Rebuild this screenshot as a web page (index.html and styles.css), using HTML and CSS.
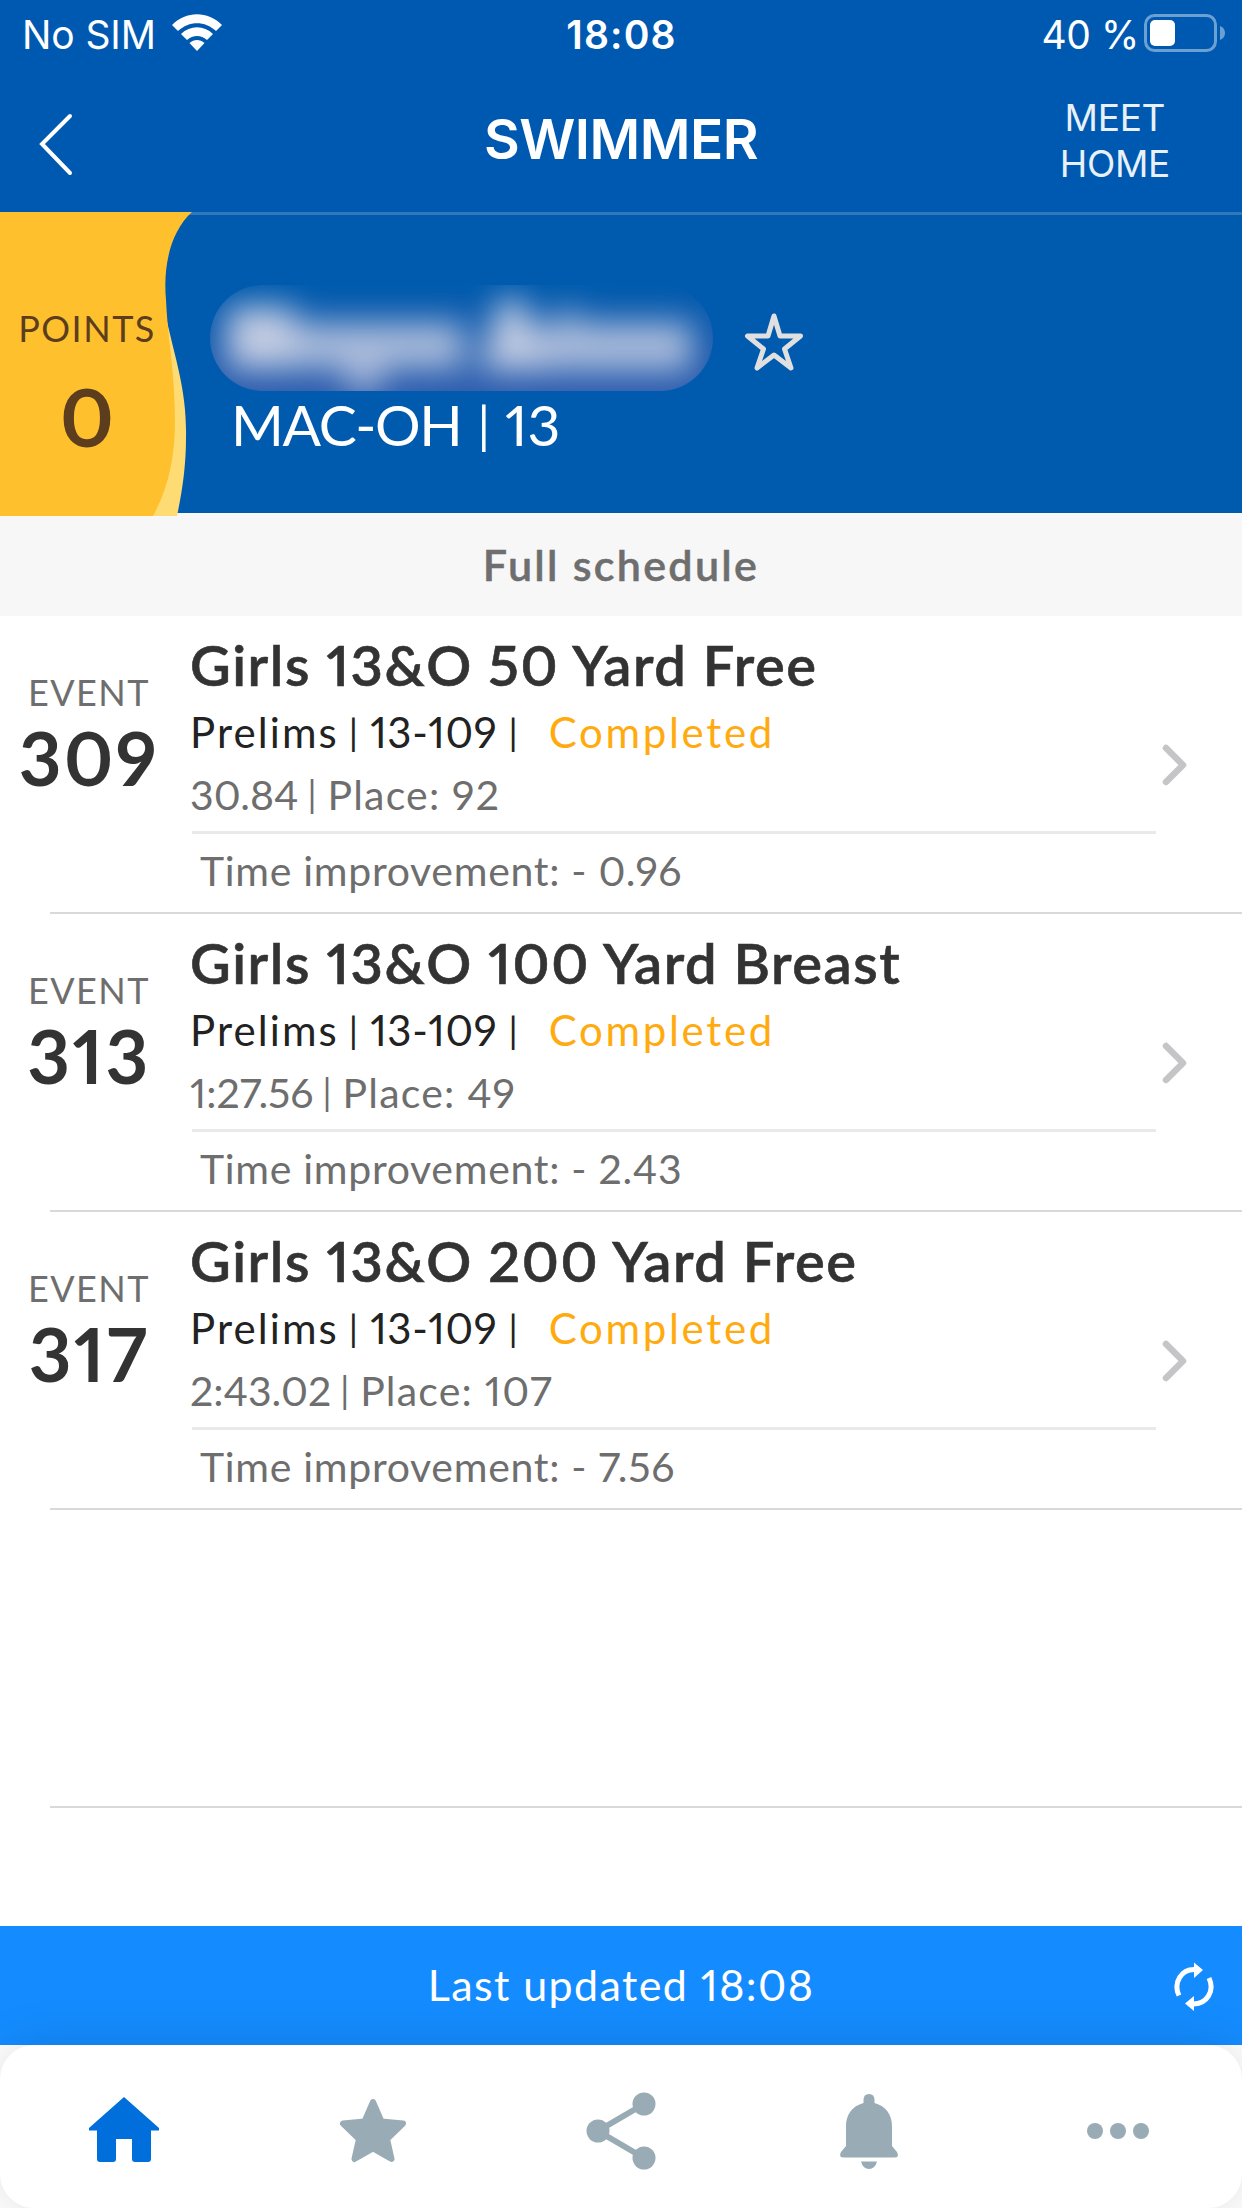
FILE: index.html
```
<!DOCTYPE html>
<html lang="en">
<head>
    <meta charset="UTF-8">
    <meta name="viewport" content="width=device-width, initial-scale=1.0">
    <title>Swimmer</title>
    <link rel="stylesheet" href="styles.css">
</head>
<body>

<div class="status-bar">
    <div class="carrier">
        <span class="carrier-name">No SIM</span>
        <svg class="wifi" width="50" height="38" viewBox="0 0 50 38">
            <path fill="#fff" d="M0 11 C14 -3.5 36 -3.5 50 11 L44 17 C33 6.500 17 6.500 6 17 Z"/>
            <path fill="#fff" d="M9 20 C18 11 32 11 41 20 L35 26 C29 20.500 21 20.500 15 26 Z"/>
            <path fill="#fff" d="M17.500 29 C22 25 28 25 32.500 29 L25 37 Z"/>
        </svg>
    </div>
    <span class="clock">18:08</span>
    <div class="battery">
        <span class="battery-text">40 %</span>
        <svg width="82" height="38" viewBox="0 0 82 38">
            <rect x="1.500" y="1.500" width="70" height="35" rx="9" fill="none" stroke="#6ba0d3" stroke-width="3"/>
            <rect x="6" y="6" width="25" height="26" rx="5" fill="#fff"/>
            <path d="M76 12 Q81 14 81 19 Q81 24 76 26 Z" fill="#6ba0d3"/>
        </svg>
    </div>
</div>

<div class="nav">
    <svg class="back" width="40" height="64" viewBox="0 0 40 64">
        <path d="M34 4 L6 32 L34 61" fill="none" stroke="#fff" stroke-width="4" stroke-linecap="round"/>
    </svg>
    <h1>SWIMMER</h1>
    <div class="meet-home"><span>MEET</span><span>HOME</span></div>
</div>

<div class="hero">
    <div class="points">
        <svg class="wave" width="192" height="304" viewBox="0 0 192 304">
            <path fill="#ffdc73" d="M150 90 L166 105 C176 150 187 180 186 226 C186 255 182 280 177 304 L140 304 Z"/>
            <path fill="#ffc02e" d="M0 0 H192 C170 20 163 55 166 88 C168 130 175 160 175 210 C175 245 168 277 153 304 H0 Z"/>
        </svg>
        <div class="points-label">POINTS</div>
        <div class="points-value">0</div>
    </div>
    <div class="swimmer">
        <div class="name-row">
            <!-- name is hidden, only soft shapes are drawn -->
            <div class="name-hidden">
                <svg width="503" height="106" viewBox="0 0 503 106">
                    <g fill="#dcdcea" opacity="0.880">
                        <rect x="18" y="22" width="66" height="62"/>
                        <rect x="84" y="38" width="170" height="46" opacity="0.850"/>
                        <rect x="136" y="78" width="36" height="34" opacity="0.800"/>
                        <path d="M270 86 L290 14 H312 L336 86 Z"/>
                        <rect x="326" y="38" width="156" height="48" opacity="0.850"/>
                        <rect x="350" y="22" width="16" height="22" opacity="0.700"/>
                    </g>
                </svg>
            </div>
            <svg class="fav" width="60" height="60" viewBox="0 0 60 60">
                <path d="M30 4 L36 24 H56.500 L40.500 37 L47 56 L30 43 L13 56 L19.500 37 L3.500 24 H24 Z" fill="none" stroke="#e0e0e0" stroke-width="5" stroke-linejoin="round"/>
            </svg>
        </div>
        <div class="team"><span>MAC-OH</span><span class="sep">|</span><span class="age">13</span></div>
    </div>
</div>

<div class="schedule-title">Full schedule</div>

<div class="event">
    <div class="event-no"><span class="label">EVENT</span><span class="number">309</span></div>
    <div class="event-body">
        <div class="title">Girls 13&amp;O 50 Yard Free</div>
        <div class="round"><span>Prelims</span><span class="sep">|</span><span class="heat">13-109</span><span class="sep">|</span><span class="status">Completed</span></div>
        <div class="result"><span>30.84</span><span class="sep">|</span><span class="place">Place: 92</span></div>
        <div class="improvement">Time improvement: - 0.96</div>
    </div>
    <svg class="arrow" width="30" height="46" viewBox="0 0 30 46"><path d="M6 6 L23 23 L6 40" /></svg>
</div>

<div class="event">
    <div class="event-no"><span class="label">EVENT</span><span class="number">313</span></div>
    <div class="event-body">
        <div class="title">Girls 13&amp;O 100 Yard Breast</div>
        <div class="round"><span>Prelims</span><span class="sep">|</span><span class="heat">13-109</span><span class="sep">|</span><span class="status">Completed</span></div>
        <div class="result"><span>1:27.56</span><span class="sep">|</span><span class="place">Place: 49</span></div>
        <div class="improvement">Time improvement: - 2.43</div>
    </div>
    <svg class="arrow" width="30" height="46" viewBox="0 0 30 46"><path d="M6 6 L23 23 L6 40" /></svg>
</div>

<div class="event">
    <div class="event-no"><span class="label">EVENT</span><span class="number">317</span></div>
    <div class="event-body">
        <div class="title">Girls 13&amp;O 200 Yard Free</div>
        <div class="round"><span>Prelims</span><span class="sep">|</span><span class="heat">13-109</span><span class="sep">|</span><span class="status">Completed</span></div>
        <div class="result"><span>2:43.02</span><span class="sep">|</span><span class="place">Place: 107</span></div>
        <div class="improvement">Time improvement: - 7.56</div>
    </div>
    <svg class="arrow" width="30" height="46" viewBox="0 0 30 46"><path d="M6 6 L23 23 L6 40" /></svg>
</div>

<div class="event"></div>

<div class="bottom">
    <div class="updated">
        <span class="updated-text">Last updated 18:08</span>
        <svg class="refresh" width="40" height="50" viewBox="0 0 40 50">
            <g fill="none" stroke="#fff" stroke-width="5">
                <path d="M5 33.500 C-1 21 7 7 21 7.500"/>
                <path d="M35 16 C41 29 33 42 19 42"/>
            </g>
            <path d="M20 0.500 L29 8 L20 16 Z M20 34 L11 41.500 L20 49 Z" fill="#fff"/>
        </svg>
    </div>
    <div class="tabs">
        <svg width="72" height="78" viewBox="0 0 72 78">
            <path d="M36 5 L71 36 V38.500 H63 V67 Q63 70 60 70 H47 Q44 70 44 67 V47 H28 V67 Q28 70 25 70 H12 Q9 70 9 67 V38.500 H1 V36 Z" fill="#006fdc"/>
        </svg>
        <svg width="72" height="78" viewBox="0 0 72 78">
            <path d="M36 10 L44.500 29.500 L66 31.500 L50 47 L54.500 67 L36 56.500 L17.500 67 L22 47 L6 31.500 L27.500 29.500 Z" fill="#99abb4" stroke="#99abb4" stroke-width="6" stroke-linejoin="round"/>
        </svg>
        <svg width="72" height="78" viewBox="0 0 72 78">
            <path d="M59 12 L13 39 L59 66" fill="none" stroke="#99abb4" stroke-width="6"/>
            <g fill="#99abb4"><circle cx="59" cy="12" r="11.500"/><circle cx="13" cy="39" r="11.500"/><circle cx="59" cy="66" r="11.500"/></g>
        </svg>
        <svg width="72" height="78" viewBox="0 0 72 78">
            <path d="M30.500 11 V8 Q30.500 2 36 2 Q41.500 2 41.500 8 V11 C53 14 59 23 59 34 V54 L64 60 Q67 65.500 61 65.500 H11 Q5 65.500 8 60 L13 54 V34 C13 23 19 14 30.500 11 Z M28 69.500 H44 Q42 77 36 77 Q30 77 28 69.500 Z" fill="#99abb4"/>
        </svg>
        <svg width="72" height="78" viewBox="0 0 72 78">
            <g fill="#99abb4"><circle cx="13" cy="39" r="8"/><circle cx="36" cy="39" r="8"/><circle cx="59" cy="39" r="8"/></g>
        </svg>
    </div>
</div>

</body>
</html>
```
FILE: styles.css
```
* {
    box-sizing: border-box;
}
body {
    font-family: Lato, "Open Sans", sans-serif;
    font-variant-numeric: proportional-nums;
    background-color: #fff;
    color: #333;
    margin: 0;
    width: 1242px;
    height: 2208px;
    display: flex;
    flex-direction: column;
    overflow: hidden;
}
svg {
    display: block;
    flex-shrink: 0;
}

/* status bar and navigation */
.status-bar {
    height: 70px;
    padding: 0 16px 0 22px;
    background-color: #0059b0;
    color: #fff;
    font-family: Inter, sans-serif;
    font-size: 39px;
    line-height: 70px;
    display: grid;
    grid-template-columns: 1fr auto 1fr;
}
.carrier,
.battery {
    display: flex;
    align-items: center;
}
.carrier-name {
    letter-spacing: -0.1px;
}
.carrier svg {
    margin: -4px 0 0 16px;
}
.battery {
    justify-content: flex-end;
    letter-spacing: -0.4px;
}
.battery svg {
    margin: -4px 0 0 5px;
}
.clock {
    font-weight: 600;
    letter-spacing: 1.2px;
    margin-left: -5px;
}
.nav {
    height: 142px;
    padding: 0 72px 0 36px;
    background-color: #0059b0;
    color: #fff;
    font-family: Inter, sans-serif;
    display: grid;
    grid-template-columns: 1fr auto 1fr;
}
.back {
    margin-top: 42px;
}
h1 {
    margin: 0 -36px 0 0;
    font-size: 55px;
    font-weight: 600;
    line-height: 138px;
    letter-spacing: -0.5px;
}
.meet-home {
    justify-self: end;
    display: flex;
    flex-direction: column;
    align-items: center;
    padding-top: 25px;
    font-size: 37px;
    line-height: 46px;
    letter-spacing: -0.3px;
    color: #e8f0f8;
}

/* swimmer header */
.hero {
    height: 301px;
    background-color: #005bae;
    border-top: 3px solid #2f78bb;
    display: flex;
}
.points {
    position: relative;
    width: 192px;
    height: 304px;
    margin-top: -3px;
    padding-right: 18px;
    text-align: center;
    color: #5c3d1e;
}
.wave {
    position: absolute;
    top: 0;
    left: 0;
}
.points-label {
    position: relative;
    margin-top: 96px;
    font-size: 36px;
    line-height: 40px;
    letter-spacing: 1.5px;
}
.points-value {
    position: relative;
    margin-top: 18px;
    font-size: 81px;
    font-weight: 700;
    line-height: 100px;
}
.swimmer {
    padding: 70px 0 0 18px;
    color: #fff;
}
.name-row {
    display: flex;
    align-items: center;
}
.name-hidden {
    width: 503px;
    height: 106px;
    border-radius: 53px;
    overflow: hidden;
    background: linear-gradient(#005bae, #2c5cae);
}
.name-hidden svg {
    filter: blur(16px);
}
.fav {
    margin: 8px 0 0 31px;
}
.team {
    margin: 0 0 0 21px;
    font-size: 57px;
    line-height: 66px;
    letter-spacing: -1.4px;
}
.sep {
    margin: 0 12px 0 10px;
    font-size: 0.88em;
    line-height: 1;
    letter-spacing: 0;
    vertical-align: 0.06em;
}
.team .sep {
    margin: 0 15px 0 16px;
}
.age {
    letter-spacing: 0;
}
.schedule-title {
    height: 103px;
    background-color: #f7f7f7;
    color: #6e6e6e;
    font-size: 43px;
    font-weight: 600;
    line-height: 104px;
    letter-spacing: 2.3px;
    text-align: center;
    -webkit-text-stroke: 0.5px;
}

/* event list */
.event {
    position: relative;
    height: 298px;
    display: flex;
    flex-shrink: 0;
}
.event::after {
    content: "";
    position: absolute;
    left: 50px;
    right: 0;
    bottom: 0;
    height: 2px;
    background-color: #d9d9d9;
}
.event-no {
    width: 178px;
    padding-top: 56px;
    display: flex;
    flex-direction: column;
    align-items: center;
}
.label {
    font-size: 36px;
    line-height: 40px;
    letter-spacing: 1.5px;
    color: #6e6e6e;
}
.number {
    margin-top: 8px;
    font-size: 74px;
    font-weight: 700;
    line-height: 76px;
    letter-spacing: 2.5px;
}
.event-body {
    width: 978px;
    padding: 19px 0 0 12px;
    color: #6e6e6e;
}
.title {
    font-size: 56px;
    font-weight: 600;
    line-height: 60px;
    letter-spacing: 1.55px;
    color: #333;
    -webkit-text-stroke: 0.6px;
}
.round {
    margin-top: 14px;
    font-size: 42px;
    line-height: 46px;
    letter-spacing: 2.1px;
    color: #222;
}
.heat {
    margin-right: 1px;
    letter-spacing: 0.6px;
}
.status {
    margin-left: 19px;
    letter-spacing: 2.7px;
    color: #ffab10;
}
.result {
    margin-top: 18px;
    font-size: 41px;
    line-height: 44px;
}
.result .sep {
    margin: 0 11px 0 9px;
}
.place {
    letter-spacing: 1.2px;
}
.improvement {
    margin: 14px 0 0 2px;
    padding: 15px 0 0 8px;
    border-top: 3px solid #e9e9e9;
    font-size: 41px;
    line-height: 44px;
    letter-spacing: 0.7px;
}
.arrow {
    margin: 126px 0 0 4px;
}
.arrow path {
    fill: none;
    stroke: #c5c5c7;
    stroke-width: 6.5;
    stroke-linecap: round;
    stroke-linejoin: round;
}

/* bottom bars */
.bottom {
    margin-top: auto;
}
.updated {
    height: 119px;
    padding: 0 28px;
    background-color: #148cff;
    color: #fff;
    font-size: 43px;
    line-height: 118px;
    letter-spacing: 1.4px;
    display: grid;
    grid-template-columns: 1fr auto 1fr;
}
.updated-text {
    grid-column: 2;
}
.refresh {
    justify-self: end;
    margin-top: 36px;
}
.tabs {
    height: 163px;
    padding-top: 47px;
    background-color: #fff;
    border-radius: 34px;
    box-shadow: 0 0 50px rgba(0, 0, 0, 0.14);
    display: flex;
    justify-content: space-around;
}
```
